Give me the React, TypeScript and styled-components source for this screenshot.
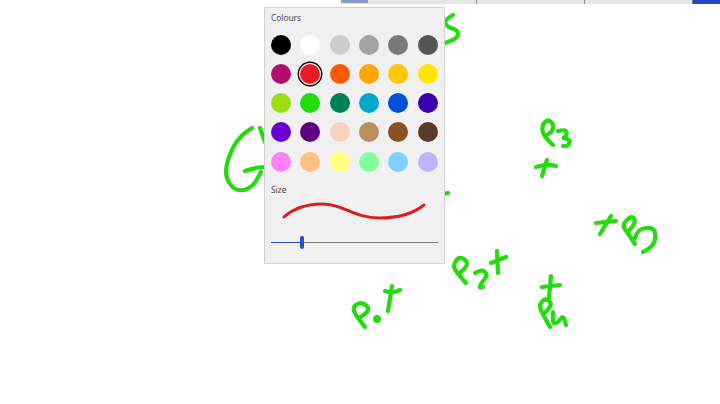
import styled, { createGlobalStyle } from "styled-components";

const GlobalStyle = createGlobalStyle`
    html, body {
        margin: 0;
        padding: 0;
        background: #fff;
    }
`;

const Stage = styled.div`
    position: relative;
    width: 720px;
    height: 404px;
    overflow: hidden;
    background: #fff;
    font-family: "Open Sans", "Liberation Sans", sans-serif;
`;

const TopStrip = styled.div`
    display: flex;
    height: 4px;
    margin-left: 341px;
    background: #e6e6e6;
`;

const StripTab = styled.div<{ $width: number; $active?: boolean; $accent?: boolean }>`
    box-sizing: border-box;
    flex: ${(p) => (p.$accent ? "1" : `0 0 ${p.$width}px`)};
    background: ${(p) => (p.$accent ? "#2048c4" : "transparent")};
    border-right: ${(p) => (p.$width > 50 ? "1px solid #8a8a8a" : "none")};
    border-top: ${(p) => (p.$active ? "3px solid #8d9ac8" : "none")};
`;

const Sketch = styled.svg`
    position: absolute;
    left: 0;
    top: 0;
`;

const Panel = styled.div`
    position: absolute;
    left: 264px;
    top: 7px;
    box-sizing: border-box;
    width: 181px;
    height: 257px;
    padding: 4px 6px 0;
    background: #f0f0f0;
    border: 1px solid #d2d2d2;
    display: flex;
    flex-direction: column;
`;

const Label = styled.div`
    font-size: 8.4px;
    line-height: 12px;
    color: #404040;
`;

const Swatches = styled.div`
    display: grid;
    grid-template-columns: repeat(6, 20px);
    grid-auto-rows: 20px;
    column-gap: 9.35px;
    row-gap: 9.25px;
    margin: 10.5px 0 12px;
`;

const Swatch = styled.div<{ $color: string; $selected?: boolean }>`
    border-radius: 50%;
    background: ${(p) => p.$color};
    box-shadow: ${(p) =>
        p.$selected ? "0 0 0 1px #fff, 0 0 0 2.4px #000" : "none"};
`;

const Preview = styled.svg`
    display: block;
    margin-top: 3px;
`;

const Slider = styled.div`
    position: relative;
    height: 14px;
    width: 167px;
    margin-top: 9px;
    display: flex;
    align-items: center;
`;

const SliderFill = styled.div`
    width: 30px;
    height: 1px;
    background: #2a50b8;
`;

const SliderRest = styled.div`
    flex: 1;
    height: 1px;
    background: #7c7c7c;
`;

const Thumb = styled.div`
    position: absolute;
    left: 28.5px;
    top: 0.5px;
    width: 4px;
    height: 13px;
    border-radius: 2px;
    background: #2450c8;
`;

const palette = [
    ["#000000", "#ffffff", "#cdcdcd", "#a2a2a2", "#7a7a7a", "#555555"],
    ["#b0106a", "#e81c24", "#ff5a00", "#ffa500", "#ffc800", "#ffe600"],
    ["#9adf14", "#22dd0c", "#008055", "#00a9cc", "#0050e0", "#3a00b0"],
    ["#6a00d0", "#5c0080", "#f7d2c0", "#b89060", "#8a5025", "#5c3a28"],
    ["#ff80f5", "#ffc080", "#ffff80", "#80ff9c", "#80d0ff", "#c0b4ff"],
];

type Pt = [number, number];

// rounds a list of points off through the midpoints
const smooth = (pts: Pt[]) => {
    let d = `M${pts[0][0]} ${pts[0][1]}`;
    for (let i = 1; i < pts.length - 1; i++) {
        const mx = (pts[i][0] + pts[i + 1][0]) / 2;
        const my = (pts[i][1] + pts[i + 1][1]) / 2;
        d += ` Q${pts[i][0]} ${pts[i][1]} ${mx} ${my}`;
    }
    const last = pts[pts.length - 1];
    return `${d} L${last[0]} ${last[1]}`;
};

const strokes: Pt[][] = [
    // G
    [[252, 128], [240, 135], [228, 157], [225, 176], [233, 189], [244, 191], [254, 185], [261, 172]],
    [[245, 171], [254, 168], [265, 167]],
    [[260, 128], [265, 142]],
    // S
    [[453, 15], [444, 20], [447, 27], [458, 30], [458, 38], [445, 43]],
    [[445, 193.6], [448, 193]],
    // P0
    [[365, 327], [355, 315], [353, 307], [360, 302], [368, 306], [368, 312], [359, 318]],
    [[385, 291], [392, 293], [400, 290]],
    [[392, 286], [388, 311]],
    // P2
    [[466, 283], [457, 273], [453, 266], [458, 257], [465, 259], [468, 265], [460, 273]],
    [[475, 273], [482, 269], [488, 275], [482, 282], [479, 288], [483, 287]],
    [[491, 263], [506, 257]],
    [[497, 251], [498, 273]],
    // P4
    [[542, 287], [560, 285]],
    [[551, 276], [549, 298]],
    [[550, 327], [542, 313], [539, 305], [545, 298], [552, 303], [548, 310], [543, 314]],
    [[553, 312], [552, 324], [558, 323], [563, 315], [566, 325]],
    // P3
    [[553, 145], [543, 136], [542, 125], [548, 119], [554, 125], [552, 132], [545, 136]],
    [[558, 131], [566, 129], [567, 136], [562, 138], [571, 140], [568, 146], [563, 146]],
    [[536, 167], [547, 164], [556, 166]],
    [[547, 160], [542, 176]],
    // P5
    [[596, 223], [616, 221]],
    [[611, 216], [600, 234]],
    [[635, 244], [627, 232], [622, 225], [632, 215], [636, 222], [628, 232]],
    [[635, 238], [637, 229], [654, 227], [656, 238], [652, 247], [643, 252]],
];

export default function App() {
    return (
        <Stage>
            <GlobalStyle />
            <TopStrip>
                <StripTab $width={27} $active />
                <StripTab $width={109} />
                <StripTab $width={108} />
                <StripTab $width={108} />
                <StripTab $width={0} $accent />
            </TopStrip>
            <Sketch width="720" height="404" viewBox="0 0 720 404" fill="none">
                {strokes.map((pts, i) => (
                    <path
                        key={i}
                        d={smooth(pts)}
                        stroke="#22dd0c"
                        strokeWidth="4.2"
                        strokeLinecap="round"
                        strokeLinejoin="round"
                    />
                ))}
                <circle cx="377" cy="319" r="4" fill="#22dd0c" />
            </Sketch>
            <Panel>
                <Label>Colours</Label>
                <Swatches>
                    {palette.flat().map((color, i) => (
                        <Swatch key={i} $color={color} $selected={i === 7} />
                    ))}
                </Swatches>
                <Label>Size</Label>
                <Preview width="167" height="28" viewBox="0 0 167 28" fill="none">
                    <path
                        d="M13 18 C24 8 38 5 52 5 C72 5 84 19 108 19 C126 19 142 15 153 6"
                        stroke="#de1c1c"
                        strokeWidth="3"
                        strokeLinecap="round"
                    />
                </Preview>
                <Slider>
                    <SliderFill />
                    <SliderRest />
                    <Thumb />
                </Slider>
            </Panel>
        </Stage>
    );
}
